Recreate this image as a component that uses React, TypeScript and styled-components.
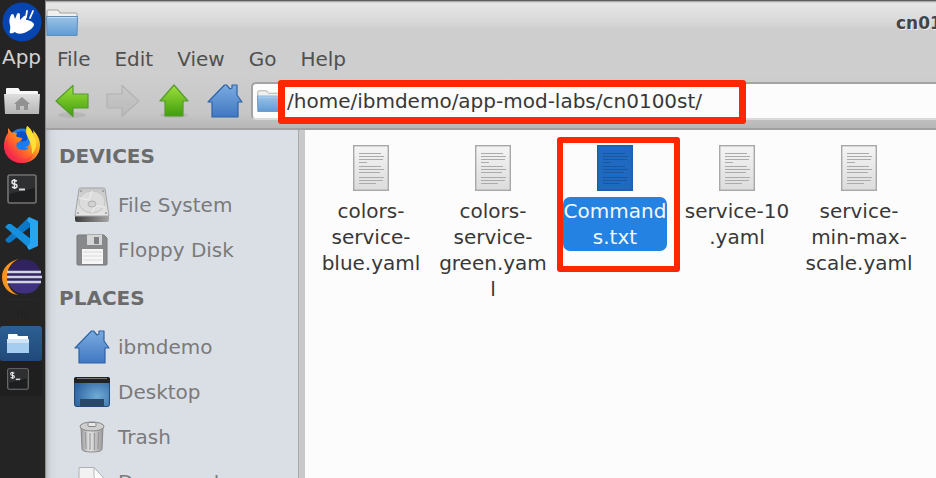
import React, { useState } from "react";
import styled, { createGlobalStyle } from "styled-components";

const GlobalStyle = createGlobalStyle`
  *, *::before, *::after { box-sizing: border-box; }
  html, body { margin: 0; padding: 0; }
  body {
    font-family: "DejaVu Sans", sans-serif;
    font-size: 20px;
    line-height: 26px;
    background: #242424;
    overflow: hidden;
  }
  button, input { font: inherit; color: inherit; }
  svg { display: block; flex: none; }
`;

const Screen = styled.div`
  display: flex;
  height: 100vh;
  overflow: hidden;
`;

/* ---------- dock ---------- */

const Dock = styled.nav`
  flex: none;
  width: 45px;
  display: flex;
  flex-direction: column;
  background: #242424;
`;

const PlainButton = styled.button`
  border: 0;
  padding: 0;
  margin: 0;
  background: none;
  display: flex;
  align-items: center;
  justify-content: center;
  cursor: pointer;
`;

const AppMenuButton = styled(PlainButton)`
  flex-direction: column;
  width: 43px;
  padding-top: 2px;
  margin-bottom: 7px;
  color: #d3d3d3;
  line-height: 30px;
`;

const DockButton = styled(PlainButton)`
  width: 43px;
  height: 44px;
`;

const DockSeparator = styled.div`
  height: 27px;
  margin: 0 7px;
  display: flex;
  align-items: center;
  justify-content: center;
  border-top: 1px solid #282828;

  &::after {
    content: "";
    width: 12px;
    height: 7px;
    background: repeating-linear-gradient(90deg, #1f1f1f 0 1px, transparent 1px 4px);
  }
`;

const TaskButton = styled(PlainButton)<{ $active?: boolean }>`
  width: 42px;
  height: 35px;
  padding-right: 7px;
  border-radius: 3px;
  background: ${(p) => (p.$active ? "linear-gradient(#2b5f93, #21497a)" : "#1f1f1f")};
`;

/* ---------- window ---------- */

const Window = styled.main`
  flex: 1;
  min-width: 0;
  display: flex;
  flex-direction: column;
  border-top: 1px solid #5c5c5c;
  border-left: 1px solid #8c8c8c;
  background: #cecece;
`;

const TitleBar = styled.header`
  height: 43px;
  flex: none;
  display: flex;
  align-items: center;
  justify-content: space-between;
  overflow: hidden;
  background: linear-gradient(#9a9a9a 0, #e6e6e6 2px, #d9d9d9 20px, #cecece 28px);
`;

const WindowTitle = styled.h1`
  flex: none;
  width: 40px;
  margin: 0;
  overflow: hidden;
  white-space: nowrap;
  font-size: 17px;
  line-height: 24px;
  font-weight: bold;
  color: #454545;
  text-shadow: 1px 1px 0 #efefef;
`;

const MenuBar = styled.nav`
  flex: none;
  height: 30px;
  padding-left: 11px;
  display: flex;
  align-items: center;
  gap: 24px;
  color: #505050;
`;

const ToolBar = styled.div`
  flex: none;
  height: 56px;
  padding-left: 1px;
  display: flex;
  align-items: center;
  gap: 1px;
  border-bottom: 2px solid #a0a0a0;
  background: linear-gradient(#cecece, #c6c6c6 40px, #b6b6b6);
`;

const ToolButton = styled(PlainButton)`
  width: 50px;
  height: 40px;
`;

const PathBar = styled.label`
  position: relative;
  flex: 1;
  min-width: 0;
  height: 38px;
  padding-left: 4px;
  display: flex;
  align-items: center;
  gap: 4px;
  border: 2px solid #a3a3a3;
  border-right: 0;
  border-bottom-color: #dadada;
  border-radius: 5px 0 0 5px;
  background: #fcfcfc;
`;

const PathInput = styled.input`
  flex: 1;
  min-width: 0;
  border: 0;
  padding: 0;
  outline: 0;
  background: transparent;
  color: #383838;
`;

const PathHighlight = styled.span`
  position: absolute;
  left: 25px;
  top: -4px;
  width: 468px;
  height: 44px;
  border: 7px solid #ff2600;
  border-radius: 3px;
  pointer-events: none;
`;

const Body = styled.div`
  flex: 1;
  min-height: 0;
  display: flex;
`;

const SideBar = styled.aside`
  flex: none;
  width: 252px;
  overflow: hidden;
  color: #7a7a7a;
  background: linear-gradient(90deg, #b9bdc3 0, #d3d8df 5px, #dadfe6 12px);
`;

const SideHeading = styled.h2`
  margin: 0;
  padding-left: 13px;
  font-size: 20px;
  line-height: 52px;
  font-weight: bold;
  color: #6b6b6b;
`;

const SideItem = styled.a`
  height: 45px;
  padding-left: 28px;
  display: flex;
  align-items: center;
  gap: 8px;
  color: inherit;
  text-decoration: none;
`;

const Divider = styled.div`
  flex: none;
  width: 7px;
  border-left: 1px solid #a9a9a9;
  background: #c9c9c9;
`;

const FileGrid = styled.section`
  flex: 1;
  min-width: 0;
  padding: 15px 0 0 5px;
  display: grid;
  grid-template-columns: repeat(auto-fill, 122px);
  align-content: start;
  background: #fcfcfc;
`;

const FileItem = styled(PlainButton)`
  position: relative;
  align-self: start;
  flex-direction: column;
  gap: 6px;
`;

const FileLabel = styled.span<{ $selected?: boolean; $breakAnywhere?: boolean }>`
  width: ${(p) => (p.$selected ? "104px" : "108px")};
  padding: 1px 0;
  border-radius: 7px;
  overflow-wrap: anywhere;
  line-break: ${(p) => (p.$breakAnywhere ? "anywhere" : "auto")};
  text-align: center;
  color: ${(p) => (p.$selected ? "#f2f7fc" : "#383838")};
  background: ${(p) => (p.$selected ? "#2382e2" : "transparent")};
`;

const FileHighlight = styled.span`
  position: absolute;
  left: 3px;
  top: -8px;
  width: 123px;
  height: 135px;
  border: 6px solid #ff2600;
  border-radius: 3px;
  pointer-events: none;
`;

/* ---------- icons ---------- */

const MouseLogo = () => (
  <svg width="40" height="40" viewBox="0 0 40 40" aria-hidden="true">
    <circle cx="20" cy="20" r="19.5" fill="#0645b0" />
    <path
      d="M8 31c-1-1 1-4 0-8-1-3-1-7 1-10 1-2 3-1 3 1l1 3 2-5c1-2 3-1 3 1v5l4-4c2-1 3 1 2 4 3 0 7 2 8 4 0 4-5 7-10 9-4 1-7 1-9-1-2 1-4 2-5 1z"
      fill="#fff"
    />
    <path d="M24 15l1-6M28 16l3-7" stroke="#fff" strokeWidth="1.8" strokeLinecap="round" />
  </svg>
);

const HomeFolderIcon = () => (
  <svg width="36" height="30" viewBox="0 0 36 30" aria-hidden="true">
    <defs>
      <linearGradient id="hf" x1="0" y1="0" x2="0" y2="1">
        <stop offset="0" stopColor="#dedede" />
        <stop offset="1" stopColor="#b5b5b5" />
      </linearGradient>
    </defs>
    <path d="M2 8V3q0-1 1-1h11q1 0 2 3h17q1 0 1 1v3z" fill="#f7f7f7" />
    <path d="M0 8h36l-1 20H1z" fill="url(#hf)" />
    <path d="M18 11l8 7h-2v6h-4v-4h-4v4h-4v-6h-2z" fill="#929292" />
  </svg>
);

const FirefoxIcon = () => (
  <svg width="37" height="38" viewBox="0 0 37 38" aria-hidden="true">
    <defs>
      <linearGradient id="ff" x1="1" y1="0" x2="0.1" y2="0.9">
        <stop offset="0" stopColor="#fff44a" />
        <stop offset="0.35" stopColor="#ffb01c" />
        <stop offset="0.62" stopColor="#ff6a28" />
        <stop offset="1" stopColor="#ee1161" />
      </linearGradient>
    </defs>
    <circle cx="19" cy="17" r="14.5" fill="#1a7cf0" />
    <path d="M11 8q8-6 15 1l-3 6-10 1z" fill="#0b4fc4" />
    <path
      d="M24 0c4 3 5 5 6 8 1-2 0-3 0-4 5 5 7 10 7 15 0 11-8 18-18 18S1 30 1 20c0-5 1-9 4-13V2c2 2 3 4 4 5 2-1 4 0 5 0-1 2-1 3 0 4l5 1c0 3-3 4-5 5-2 3 1 7 5 7 4 1 6-1 7-3-2 1-3 1-4 0 5 0 6-5 4-9-4-4-3-8-2-12z"
      fill="url(#ff)"
    />
    <path d="M24 0c4 3 6 8 9 14 1 6-1 11-4 14 0-7-1-11-4-16-2-4-2-8-1-12z" fill="#ffe03a" />
    <path d="M5 14c-2 8 3 17 12 19 6 1 11-2 13-5-1 6-7 9-12 9C8 37 1 29 1 20z" fill="#f9303f" opacity=".55" />
  </svg>
);

const TerminalIcon = ({ size = 30 }: { size?: number }) => (
  <svg width={size} height={size} viewBox="0 0 30 30" aria-hidden="true">
    <rect x="1" y="1" width="28" height="28" rx="2" fill="#1c1e1f" stroke="#747474" strokeWidth="1.600" />
    <path d="M2 2h26v12L2 20z" fill="#2e3031" />
    <path
      d="M10 7Q5 5 5 8q0 2 2 2 3 0 3 2 0 3-5 1M7.500 5v10"
      fill="none"
      stroke="#e6e6e6"
      strokeWidth="1.500"
    />
    <path d="M12 15.500h6" stroke="#d8d8d8" strokeWidth="2" />
  </svg>
);

const CodeIcon = () => (
  <svg width="35" height="35" viewBox="0 0 35 35" aria-hidden="true">
    <path d="M25 1L5 20l-4 4 3 3 3-1L26 11z" fill="#0b77c5" />
    <path d="M4 8L1 11l25 22 1-10L7 8z" fill="#168fdd" />
    <path d="M25 1l9 4v25l-9 4-2-3 3-4V8l-3-4z" fill="#26a5f0" />
  </svg>
);

const EclipseIcon = () => (
  <svg width="40" height="38" viewBox="0 0 40 38" aria-hidden="true">
    <path d="M17 1C7 3 0 10 0 19c0 10 7 17 16 18C8 33 5 27 5 19S9 4 17 1z" fill="#f7941e" />
    <circle cx="22.500" cy="18.500" r="17" fill="#30235f" />
    <path d="M6 23h33c-2 8-8 12.500-16.500 12.500S8 31 6 23z" fill="#3f3180" />
    <path d="M5 14h34M5 19h35M5 24h34" stroke="#d2d3e2" strokeWidth="2.600" />
  </svg>
);

const FolderIcon = ({ width = 32, height = 27 }: { width?: number; height?: number }) => (
  <svg width={width} height={height} viewBox="0 0 32 27" preserveAspectRatio="none" aria-hidden="true">
    <defs>
      <linearGradient id="fo" x1="0" y1="0" x2="0" y2="1">
        <stop offset="0" stopColor="#9cc3e6" />
        <stop offset="1" stopColor="#5f9bd5" />
      </linearGradient>
    </defs>
    <path d="M1 8V2q0-1 1-1h10l2 3h16q1 0 1 1v3z" fill="#f0f0ee" stroke="#a2a2a0" />
    <path d="M.500 7.500h31l-.500 19H1z" fill="url(#fo)" stroke="#5f8cb8" />
    <path d="M1.500 8.500h29" stroke="#c4dff4" />
  </svg>
);

const TaskFolderIcon = () => (
  <svg width="24" height="20" viewBox="0 0 24 20" aria-hidden="true">
    <path d="M2 5V1q0-1 1-1h8l1 2h10v4z" fill="#fff" />
    <path d="M1 5h22v14H1z" fill="#a5cdf0" />
    <path d="M1 5h22v4H1z" fill="#cfe4f6" />
  </svg>
);

const arrowPaths = {
  back: "M1 17L18 1.500V10h15v14H18v8.500z",
  forward: "M33 17L16 1.500V10H1v14h15v8.500z",
  up: "M17 1L31 17h-5v15H8V17H3z",
};

const ArrowIcon = ({ kind }: { kind: keyof typeof arrowPaths }) => {
  const off = kind === "forward";
  return (
    <svg width="34" height="34" viewBox="0 0 34 34" aria-hidden="true">
      <defs>
        <linearGradient id={`ar-${kind}`} x1="0" y1="0" x2="0" y2="1">
          <stop offset="0" stopColor={off ? "#c9c9c9" : "#9fe03c"} />
          <stop offset="1" stopColor={off ? "#bababa" : "#3f9e0c"} />
        </linearGradient>
      </defs>
      {!off && <ellipse cx="17" cy="31" rx="14" ry="3" fill="#000" opacity=".07" />}
      <path
        d={arrowPaths[kind]}
        fill={`url(#ar-${kind})`}
        stroke={off ? "#b0b3b0" : "#559c2c"}
        strokeWidth="1.200"
        strokeLinejoin="round"
      />
    </svg>
  );
};

const HomeIcon = () => (
  <svg width="36" height="34" viewBox="0 0 36 34" aria-hidden="true">
    <defs>
      <linearGradient id="ho" x1="0" y1="0" x2="0" y2="1">
        <stop offset="0" stopColor="#7aabe0" />
        <stop offset="1" stopColor="#4077c2" />
      </linearGradient>
    </defs>
    <path
      d="M1 18L17.500 1h2L23 5l2-1V1h5v10l5 7h-4v15H5V18z"
      fill="url(#ho)"
      stroke="#2f63a5"
      strokeWidth="1.200"
      strokeLinejoin="round"
    />
  </svg>
);

const DriveIcon = () => (
  <svg width="36" height="36" viewBox="0 0 36 36" aria-hidden="true">
    <defs>
      <linearGradient id="dr" x1="0" y1="0" x2="0" y2="1">
        <stop offset="0" stopColor="#c8c8c8" />
        <stop offset="1" stopColor="#e6e6e6" />
      </linearGradient>
      <linearGradient id="df" x1="0" y1="0" x2="1" y2="0">
        <stop offset="0" stopColor="#3c3c3c" />
        <stop offset="1" stopColor="#a6a6a6" />
      </linearGradient>
    </defs>
    <path d="M1 27v6q0 2 2 2h30q2 0 2-2v-6z" fill="url(#df)" />
    <path d="M5 2q0-1 2-1h22q2 0 2 1l4 27H1z" fill="url(#dr)" stroke="#a3a3a3" />
    <circle cx="7" cy="4" r="1" fill="#999" />
    <circle cx="29" cy="4" r="1" fill="#999" />
    <circle cx="4" cy="26" r="1" fill="#999" />
    <circle cx="32" cy="26" r="1" fill="#999" />
    <ellipse cx="18" cy="15" rx="13" ry="11" fill="#dcdcdc" stroke="#c4c4c4" />
    <path d="M18 4l-3 9-10-2M18 26l3-7 10 1" stroke="#e9e9e9" strokeWidth="1.500" fill="none" />
    <ellipse cx="18" cy="17" rx="4" ry="3" fill="#d2d2d2" stroke="#b2b2b2" />
  </svg>
);

const FloppyIcon = () => (
  <svg width="36" height="32" viewBox="0 0 36 32" aria-hidden="true">
    <path d="M3 2q0-1 1-1h26l3 3v26q0 1-1 1H4q-1 0-1-1z" fill="#87898b" stroke="#76787a" />
    <rect x="13" y="1" width="15" height="10" fill="#d5d5d5" />
    <rect x="20" y="3" width="5" height="7" fill="#7c7e80" />
    <rect x="8" y="15" width="21" height="15" fill="#f6f6f6" />
    <path d="M9 18h19M9 22h19M9 26h19" stroke="#dadada" />
  </svg>
);

const DesktopIcon = () => (
  <svg width="36" height="30" viewBox="0 0 36 30" aria-hidden="true">
    <defs>
      <radialGradient id="de" cx=".65" cy=".65" r=".7">
        <stop offset="0" stopColor="#70abd5" />
        <stop offset="1" stopColor="#2c62a0" />
      </radialGradient>
    </defs>
    <rect x=".500" y=".500" width="35" height="29" rx="2" fill="url(#de)" stroke="#244a77" />
    <path d="M0 2q0-2 2-2h32q2 0 2 2v4H0z" fill="#222" />
    <path d="M3 1.500h30" stroke="#777" />
    <rect x="6" y="22" width="24" height="7" fill="#294867" />
  </svg>
);

const TrashIcon = () => (
  <svg width="36" height="32" viewBox="0 0 36 32" aria-hidden="true">
    <defs>
      <linearGradient id="tr" x1="0" y1="0" x2="1" y2="0">
        <stop offset="0" stopColor="#9a9a9a" />
        <stop offset=".4" stopColor="#e5e5e5" />
        <stop offset="1" stopColor="#9a9a9a" />
      </linearGradient>
    </defs>
    <path d="M7 6l1 22q0 3 10 3t10-3l1-22z" fill="url(#tr)" stroke="#8a8a8a" />
    <path d="M11.500 11l.500 17M16 12v17M20.500 12v17M24.500 11l-.500 17" stroke="#999" strokeWidth="1.200" />
    <ellipse cx="18" cy="5.500" rx="12" ry="4.500" fill="#cfcfcf" stroke="#858585" />
    <rect x="14" y="1.500" width="8" height="4" rx="1" fill="#e8e8e8" stroke="#858585" />
  </svg>
);

const DocumentIcon = () => (
  <svg width="36" height="40" viewBox="0 0 36 40" aria-hidden="true">
    <path d="M5 5.500h15l11 12V39H5z" fill="#f2f2f2" stroke="#b0b0b0" />
    <path d="M20 5.500v9q0 3 3 3h8z" fill="#fcfcfc" stroke="#b7b7b7" />
  </svg>
);

const TextFileIcon = ({ selected }: { selected?: boolean }) => {
  const line = selected ? "#1b559b" : "#ababab";
  return (
    <svg width="36" height="46" viewBox="0 0 36 46" aria-hidden="true">
      <defs>
        <linearGradient id="tf" x1="0" y1="0" x2="0" y2="1">
          <stop offset="0" stopColor="#f4f4f4" />
          <stop offset="1" stopColor="#dcdcdc" />
        </linearGradient>
      </defs>
      <rect
        x=".700"
        y=".700"
        width="34.600"
        height="44.600"
        fill={selected ? "#2069c0" : "url(#tf)"}
        stroke={selected ? "#1d5eae" : "#a8a8a8"}
        strokeWidth="1.400"
      />
      <path
        d="M6 8.500h22M6 11.500h25M6 14.500h24M6 17.500h8M6 21.500h22M6 24.500h25M6 27.500h21M6 32.500h25M6 35.500h24M6 38.500h17"
        stroke={line}
        strokeWidth="1"
      />
    </svg>
  );
};

/* ---------- data ---------- */

const menus = ["File", "Edit", "View", "Go", "Help"];

const groups = [
  {
    title: "DEVICES",
    items: [
      { name: "File System", icon: <DriveIcon /> },
      { name: "Floppy Disk", icon: <FloppyIcon /> },
    ],
  },
  {
    title: "PLACES",
    items: [
      { name: "ibmdemo", icon: <HomeIcon /> },
      { name: "Desktop", icon: <DesktopIcon /> },
      { name: "Trash", icon: <TrashIcon /> },
      { name: "Documents", icon: <DocumentIcon /> },
    ],
  },
];

const files = [
  { name: "colors-service-blue.yaml" },
  { name: "colors-service-green.yaml" },
  { name: "Commands.txt", selected: true },
  { name: "service-10.yaml", breakAnywhere: true },
  { name: "service-min-max-scale.yaml" },
];

export default function App() {
  const [path, setPath] = useState("/home/ibmdemo/app-mod-labs/cn0100st/");

  return (
    <Screen>
      <GlobalStyle />
      <Dock aria-label="Launcher">
        <AppMenuButton>
          <MouseLogo />
          App
        </AppMenuButton>
        <DockButton aria-label="Home folder"><HomeFolderIcon /></DockButton>
        <DockButton aria-label="Firefox"><FirefoxIcon /></DockButton>
        <DockButton aria-label="Terminal"><TerminalIcon /></DockButton>
        <DockButton aria-label="Code editor"><CodeIcon /></DockButton>
        <DockButton aria-label="Eclipse"><EclipseIcon /></DockButton>
        <DockSeparator />
        <TaskButton $active aria-label="File manager window"><TaskFolderIcon /></TaskButton>
        <TaskButton aria-label="Terminal window"><TerminalIcon size={22} /></TaskButton>
      </Dock>
      <Window>
        <TitleBar>
          <FolderIcon />
          <WindowTitle>cn0100st</WindowTitle>
        </TitleBar>
        <MenuBar aria-label="Menu">
          {menus.map((name) => (
            <PlainButton key={name}>{name}</PlainButton>
          ))}
        </MenuBar>
        <ToolBar>
          <ToolButton aria-label="Back"><ArrowIcon kind="back" /></ToolButton>
          <ToolButton aria-label="Forward" disabled><ArrowIcon kind="forward" /></ToolButton>
          <ToolButton aria-label="Up"><ArrowIcon kind="up" /></ToolButton>
          <ToolButton aria-label="Home"><HomeIcon /></ToolButton>
          <PathBar>
            <FolderIcon width={26} height={22} />
            <PathInput aria-label="Location" value={path} onChange={(e) => setPath(e.target.value)} />
            <PathHighlight />
          </PathBar>
        </ToolBar>
        <Body>
          <SideBar>
            {groups.map((group) => (
              <React.Fragment key={group.title}>
                <SideHeading>{group.title}</SideHeading>
                {group.items.map((item) => (
                  <SideItem key={item.name} href="#">
                    {item.icon}
                    {item.name}
                  </SideItem>
                ))}
              </React.Fragment>
            ))}
          </SideBar>
          <Divider />
          <FileGrid>
            {files.map((file) => (
              <FileItem key={file.name}>
                <TextFileIcon selected={file.selected} />
                <FileLabel $selected={file.selected} $breakAnywhere={file.breakAnywhere}>
                  {file.name}
                </FileLabel>
                {file.selected && <FileHighlight />}
              </FileItem>
            ))}
          </FileGrid>
        </Body>
      </Window>
    </Screen>
  );
}
